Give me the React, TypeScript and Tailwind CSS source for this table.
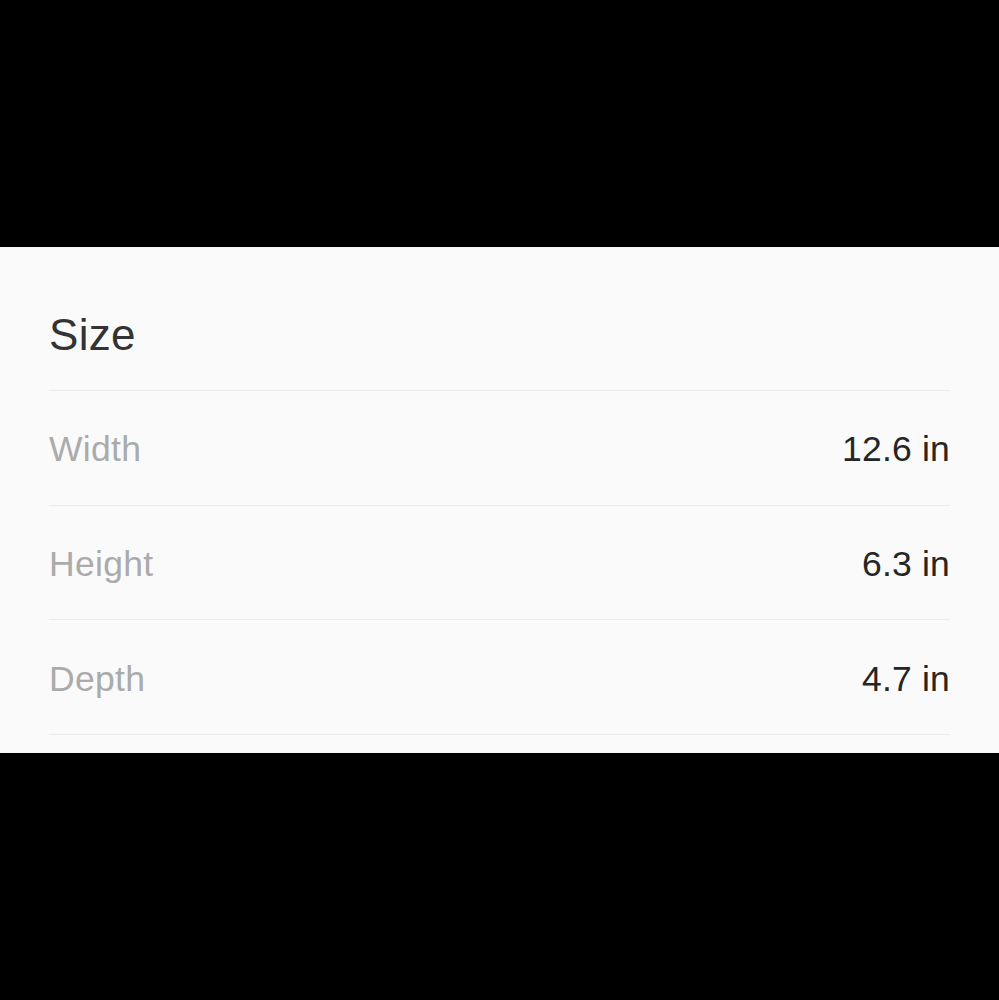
const rows = [
  { label: 'Width', value: '12.6 in' },
  { label: 'Height', value: '6.3 in' },
  { label: 'Depth', value: '4.7 in' },
]

export default function App() {
  return (
    <div className="bg-black h-[1000px] flex items-center" style={{ fontFamily: '"Liberation Sans", Arial, sans-serif' }}>
      <section className="w-full bg-[#fafafa] px-[49px] pb-[18px]">
        <h2 className="pt-[61px] pb-[29px] text-[44px] leading-[53px] text-[#333333] border-b border-[#ececec] tracking-[0.3px]">
          Size
        </h2>
        {rows.map(row => (
          <div
            key={row.label}
            className="h-[114.67px] flex items-center justify-between border-b border-[#ececec] text-[35.5px] pt-[4px]"
          >
            <span className="text-[#ababab] tracking-[0.3px]">{row.label}</span>
            <span className="text-[#262626] tracking-[0.2px]">{row.value}</span>
          </div>
        ))}
      </section>
    </div>
  )
}
